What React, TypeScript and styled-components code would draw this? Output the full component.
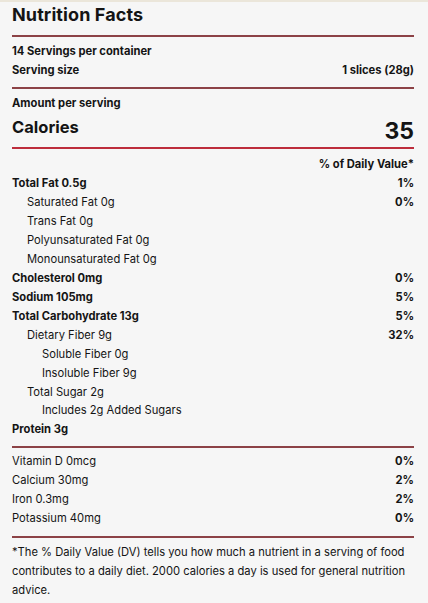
import React from "react";
import styled, { createGlobalStyle } from "styled-components";

const GlobalStyle = createGlobalStyle`
  html, body {
    margin: 0;
    padding: 0;
    background: #f6f6f6;
  }
  body {
    font-family: Inter, "Open Sans", "Liberation Sans", sans-serif;
    color: #141414;
    -webkit-font-smoothing: antialiased;
  }
`;

const Label = styled.div`
  width: 428px;
  min-height: 603px;
  box-sizing: border-box;
  padding: 0 14px 0 12px;
  border-top: 2px solid #ebe6da;
  overflow: hidden;
`;

const Title = styled.h1`
  margin: 0;
  height: 33px;
  font-size: 18px;
  line-height: 25px;
  font-weight: 700;
  letter-spacing: 0.1px;
`;

const Divider = styled.div<{ $red?: boolean }>`
  height: 2px;
  background: ${(p) => (p.$red ? "#bd2d3c" : "#8c4246")};
`;

const Section = styled.div<{ $top?: number; $bottom?: number }>`
  display: flex;
  flex-direction: column;
  padding-top: ${(p) => p.$top ?? 5}px;
  padding-bottom: ${(p) => p.$bottom ?? 7}px;
`;

const Row = styled.div<{ $indent?: number; $bold?: boolean }>`
  display: flex;
  justify-content: space-between;
  align-items: center;
  height: 18.95px;
  padding-left: ${(p) => (p.$indent ?? 0) * 15}px;
  font-size: 11.2px;
  font-weight: ${(p) => (p.$bold ? 700 : 400)};
`;

const Value = styled.span`
  font-weight: 700;
`;

const CaloriesRow = styled.div`
  display: flex;
  justify-content: space-between;
  align-items: flex-start;
  height: 34px;
  font-weight: 700;
`;

const CaloriesLabel = styled.span`
  font-size: 16.5px;
  line-height: 28px;
`;

const CaloriesValue = styled.span`
  font-size: 23px;
  line-height: 36px;
`;

const Footnote = styled.p`
  margin: 0;
  padding-top: 5px;
  font-size: 11.2px;
  line-height: 19px;
`;

type Nutrient = {
  name: string;
  dv?: string;
  indent?: number;
  bold?: boolean;
};

const nutrients: Nutrient[] = [
  { name: "Total Fat 0.5g", dv: "1%", bold: true },
  { name: "Saturated Fat 0g", dv: "0%", indent: 1 },
  { name: "Trans Fat 0g", indent: 1 },
  { name: "Polyunsaturated Fat 0g", indent: 1 },
  { name: "Monounsaturated Fat 0g", indent: 1 },
  { name: "Cholesterol 0mg", dv: "0%", bold: true },
  { name: "Sodium 105mg", dv: "5%", bold: true },
  { name: "Total Carbohydrate 13g", dv: "5%", bold: true },
  { name: "Dietary Fiber 9g", dv: "32%", indent: 1 },
  { name: "Soluble Fiber 0g", indent: 2 },
  { name: "Insoluble Fiber 9g", indent: 2 },
  { name: "Total Sugar 2g", indent: 1 },
  { name: "Includes 2g Added Sugars", indent: 2 },
  { name: "Protein 3g", bold: true },
];

const vitamins: Nutrient[] = [
  { name: "Vitamin D 0mcg", dv: "0%" },
  { name: "Calcium 30mg", dv: "2%" },
  { name: "Iron 0.3mg", dv: "2%" },
  { name: "Potassium 40mg", dv: "0%" },
];

function NutrientRow({ item }: { item: Nutrient }) {
  return (
    <Row $indent={item.indent} $bold={item.bold}>
      <span>{item.name}</span>
      {item.dv ? <Value>{item.dv}</Value> : null}
    </Row>
  );
}

export default function App() {
  return (
    <>
      <GlobalStyle />
      <Label>
        <Title>Nutrition Facts</Title>
        <Divider />
        <Section>
          <Row $bold>14 Servings per container</Row>
          <Row $bold>
            <span>Serving size</span>
            <span>1 slices (28g)</span>
          </Row>
        </Section>
        <Divider />
        <Section $bottom={0}>
          <Row $bold>Amount per serving</Row>
          <CaloriesRow>
            <CaloriesLabel>Calories</CaloriesLabel>
            <CaloriesValue>35</CaloriesValue>
          </CaloriesRow>
        </Section>
        <Divider $red />
        <Section $top={6}>
          <Row $bold>
            <span />
            <span>% of Daily Value*</span>
          </Row>
          {nutrients.map((n) => (
            <NutrientRow key={n.name} item={n} />
          ))}
        </Section>
        <Divider />
        <Section $top={4} $bottom={8}>
          {vitamins.map((n) => (
            <NutrientRow key={n.name} item={n} />
          ))}
        </Section>
        <Divider />
        <Footnote>
          *The % Daily Value (DV) tells you how much a nutrient in a serving of
          food contributes to a daily diet. 2000 calories a day is used for
          general nutrition advice.
        </Footnote>
      </Label>
    </>
  );
}
